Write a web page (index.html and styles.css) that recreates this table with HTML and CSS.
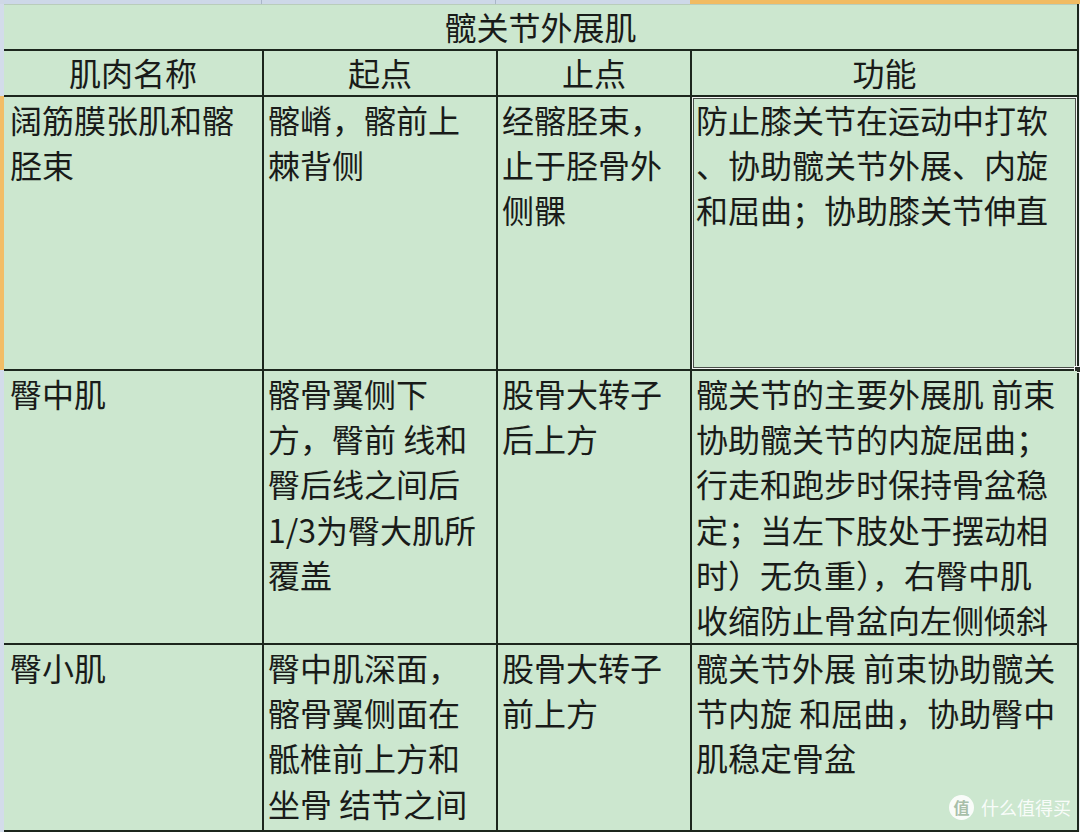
FILE: index.html
```html
<!DOCTYPE html>
<html lang="zh-CN">
<head>
<meta charset="utf-8">
<title>髋关节外展肌</title>
<link rel="stylesheet" href="styles.css">
</head>
<body>
<div class="page">
  <div class="corner"></div>
  <div class="colheads">
    <div class="ch ch1"></div>
    <div class="ch ch2"></div>
    <div class="ch ch3"></div>
    <div class="ch ch4 sel"></div>
  </div>
  <div class="rowheads">
    <div class="rh rh-top"></div>
    <div class="rh rh-sel"></div>
    <div class="rh rh-rest"></div>
  </div>
  <div class="sheet">
    <div class="cell title">髋关节外展肌</div>

    <div class="cell head">肌肉名称</div>
    <div class="cell head">起点</div>
    <div class="cell head">止点</div>
    <div class="cell head">功能</div>

    <div class="cell data first"><p class="txt">阔筋膜张肌和髂<br>胫束</p></div>
    <div class="cell data"><p class="txt">髂嵴，髂前上<br>棘背侧</p></div>
    <div class="cell data"><p class="txt">经髂胫束，<br>止于胫骨外<br>侧髁</p></div>
    <div class="cell data active"><p class="txt">防止膝关节在运动中打软<br>、协助髋关节外展、内旋<br>和屈曲；协助膝关节伸直</p><span class="handle"></span></div>

    <div class="cell data first"><p class="txt">臀中肌</p></div>
    <div class="cell data"><p class="txt">髂骨翼侧下<br>方，臀前 线和<br>臀后线之间后<br>1/3为臀大肌所<br>覆盖</p></div>
    <div class="cell data"><p class="txt">股骨大转子<br>后上方</p></div>
    <div class="cell data"><p class="txt">髋关节的主要外展肌 前束<br>协助髋关节的内旋屈曲；<br>行走和跑步时保持骨盆稳<br>定；当左下肢处于摆动相<br>时）无负重），右臀中肌<br>收缩防止骨盆向左侧倾斜</p></div>

    <div class="cell data first"><p class="txt">臀小肌</p></div>
    <div class="cell data"><p class="txt">臀中肌深面，<br>髂骨翼侧面在<br>骶椎前上方和<br>坐骨 结节之间</p></div>
    <div class="cell data"><p class="txt">股骨大转子<br>前上方</p></div>
    <div class="cell data"><p class="txt">髋关节外展 前束协助髋关<br>节内旋 和屈曲，协助臀中<br>肌稳定骨盆</p></div>
  </div>
  <div class="watermark">
    <span class="wm-logo">值</span>
    <span class="wm-text">什么值得买</span>
  </div>
</div>
</body>
</html>
```

FILE: styles.css
```css
html, body {
  margin: 0;
  padding: 0;
  background: #eef1f4;
}

.page {
  position: relative;
  width: 1080px;
  height: 832px;
  display: grid;
  grid-template-columns: 4px 1076px;
  grid-template-rows: 4px 828px;
  overflow: hidden;
  font-family: "Noto Sans CJK SC", "Noto Sans", sans-serif;
  color: #191b19;
}

.corner {
  background: #cfd8e6;
}

.colheads {
  display: flex;
}

.ch {
  height: 4px;
  background: #cdd8e8;
  box-sizing: border-box;
}

.ch1 { width: 258px; border-right: 1px solid #a9b6c8; }
.ch2 { width: 234px; border-right: 1px solid #a9b6c8; }
.ch3 { width: 194px; }
.ch4 { width: 390px; }

.ch.sel {
  background: #f1bb62;
}

.rowheads {
  display: flex;
  flex-direction: column;
}

.rh {
  width: 4px;
  background: #d3dcea;
}

.rh-top { height: 92px; }
.rh-sel { height: 274px; background: #f2bd66; }
.rh-rest { flex: 1; }

.sheet {
  display: grid;
  grid-template-columns: 258px 232px 192px 385px;
  grid-template-rows: 45px 44px 272px 272px 185px;
  gap: 2px;
  padding: 0 2px 2px 0;
  background: #1c261d;
  width: 1075px;
  box-sizing: border-box;
  align-self: start;
}

.cell {
  background: #cce7cf;
  font-size: 32px;
  white-space: nowrap;
  box-sizing: border-box;
}

.title {
  grid-column: 1 / 5;
  text-align: center;
  line-height: 43px;
  border-top: 1px solid #b9cdbb;
}

.head {
  text-align: center;
  line-height: 43px;
}

.data {
  padding: 0 0 0 4px;
  position: relative;
  line-height: 45.2px;
}

.data.first {
  padding-left: 6px;
}

.txt {
  margin: 0;
}

.active {
  box-shadow: inset 0 0 0 1px #f3f5f3, inset 0 0 0 2px #4a4f4a;
}

.handle {
  position: absolute;
  right: -4px;
  bottom: -4px;
  width: 5px;
  height: 5px;
  background: #2a2f2a;
  border: 1px solid #f4f4f4;
}

.watermark {
  position: absolute;
  left: 949px;
  top: 795px;
  display: flex;
  align-items: center;
  gap: 7px;
}

.wm-logo {
  width: 25px;
  height: 25px;
  border-radius: 50%;
  background: rgba(255, 255, 255, 0.88);
  color: #a8bfa9;
  font-size: 16px;
  line-height: 25px;
  text-align: center;
  font-weight: bold;
}

.wm-text {
  color: rgba(255, 255, 255, 0.9);
  font-size: 18px;
  line-height: 25px;
  letter-spacing: 0;
}
```
